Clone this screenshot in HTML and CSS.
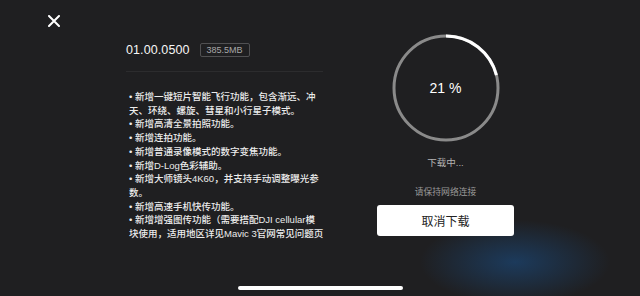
FILE: index.html
```html
<!DOCTYPE html>
<html lang="zh-CN">
<head>
<meta charset="utf-8">
<link rel="stylesheet" href="styles.css">
</head>
<body>
<div class="page">
  <div class="side">
    <svg class="close" width="12" height="12" viewBox="0 0 12 12"><path d="M1 1L11 11M11 1L1 11" stroke="#fff" stroke-width="2" stroke-linecap="round"/></svg>
  </div>
  <div class="info">
    <div class="version-row">
      <span class="version">01.00.0500</span>
      <span class="size">385.5MB</span>
    </div>
    <div class="divider"></div>
    <div class="notes">
      <p>• 新增一键短片智能飞行功能，包含渐远、冲<br>天、环绕、螺旋、彗星和小行星子模式。</p>
      <p>• 新增高清全景拍照功能。</p>
      <p>• 新增连拍功能。</p>
      <p>• 新增普通录像模式的数字变焦功能。</p>
      <p>• 新增D-Log色彩辅助。</p>
      <p>• 新增大师镜头4K60，并支持手动调整曝光参<br>数。</p>
      <p>• 新增高速手机快传功能。</p>
      <p>• 新增增强图传功能（需要搭配DJI cellular模<br>块使用，适用地区详见Mavic 3官网常见问题页</p>
    </div>
  </div>
  <div class="progress">
    <div class="ring">
      <svg width="108" height="108" viewBox="0 0 108 108">
        <circle cx="54" cy="54" r="52" fill="none" stroke="#8a8a8a" stroke-width="3"/>
        <circle cx="54" cy="54" r="52" fill="none" stroke="#ffffff" stroke-width="3" stroke-dasharray="68.6 400" transform="rotate(-90 54 54)"/>
      </svg>
      <span class="percent">21 %</span>
    </div>
    <div class="status">下载中...</div>
    <div class="hint">请保持网络连接</div>
    <button class="cancel">取消下载</button>
  </div>
</div>
<div class="home-bar"></div>
</body>
</html>
```
FILE: styles.css
```css
* { box-sizing: border-box; }
html, body {
  margin: 0;
  width: 640px;
  height: 296px;
  overflow: hidden;
}
body {
  position: relative;
  background:
    radial-gradient(ellipse 95px 42px at 515px 262px, rgba(28, 60, 95, 0.95), rgba(28, 60, 95, 0) 100%),
    #1f1f21;
  font-family: "Liberation Sans", "Noto Sans CJK SC", sans-serif;
  color: #fff;
}
.page {
  display: flex;
  height: 296px;
}
.side {
  width: 126px;
  padding: 15px 0 0 48px;
}
.close { display: block; }
.info {
  width: 200px;
  padding-top: 43px;
}
.version-row {
  display: flex;
  align-items: center;
  height: 14px;
}
.version {
  font-size: 12.5px;
  color: #f6f6f6;
  letter-spacing: 0.1px;
}
.size {
  margin-left: 10px;
  height: 14px;
  width: 50px;
  border: 1px solid #505052;
  border-radius: 2px;
  font-size: 9px;
  line-height: 12px;
  color: #a8a8a8;
  text-align: center;
}
.divider {
  margin-top: 14px;
  width: 197px;
  height: 1px;
  background: #2c2c2e;
}
.notes {
  margin-top: 18px;
  padding-left: 3px;
  font-size: 9.5px;
  font-weight: 500;
  line-height: 13.7px;
  color: #ececec;
  white-space: nowrap;
}
.notes p { margin: 0; }
.progress {
  margin-left: 51px;
  width: 137px;
  padding-top: 34px;
  display: flex;
  flex-direction: column;
  align-items: center;
}
.ring {
  position: relative;
  width: 108px;
  height: 108px;
}
.ring svg { display: block; }
.percent {
  position: absolute;
  left: 0;
  right: 0;
  top: 46px;
  text-align: center;
  font-size: 14px;
  line-height: 16px;
  color: #fff;
}
.status {
  margin-top: 14px;
  font-size: 9.5px;
  line-height: 14px;
  color: #b4b4b4;
}
.hint {
  margin-top: 16px;
  font-size: 8.8px;
  line-height: 12px;
  color: #9a9a9a;
}
.cancel {
  margin-top: 7px;
  width: 137px;
  height: 31px;
  border: none;
  border-radius: 3px;
  background: #fff;
  color: #222;
  font-family: "Liberation Sans", "Noto Sans CJK SC", sans-serif;
  font-size: 12px;
  padding: 0;
}
.home-bar {
  position: absolute;
  left: 238px;
  top: 286px;
  width: 165px;
  height: 4px;
  border-radius: 2px;
  background: #fff;
}
```
